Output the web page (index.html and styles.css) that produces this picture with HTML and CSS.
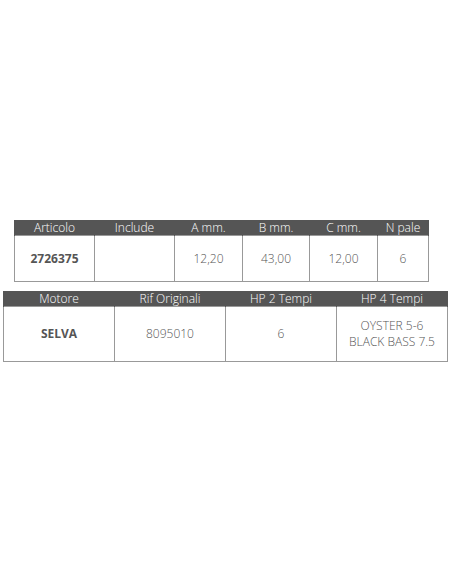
FILE: index.html
```html
<!DOCTYPE html>
<html>
<head>
<meta charset="utf-8">
<link rel="stylesheet" href="styles.css">
</head>
<body>
<div class="page">
  <table class="spec spec-a">
    <colgroup>
      <col style="width:80px"><col style="width:80px"><col style="width:68px"><col style="width:67px"><col style="width:68px"><col style="width:51px">
    </colgroup>
    <thead>
      <tr><th>Articolo</th><th>Include</th><th>A mm.</th><th>B mm.</th><th>C mm.</th><th>N pale</th></tr>
    </thead>
    <tbody>
      <tr><td class="strong">2726375</td><td></td><td>12,20</td><td>43,00</td><td>12,00</td><td>6</td></tr>
    </tbody>
  </table>
  <table class="spec spec-b">
    <colgroup>
      <col style="width:111px"><col style="width:111px"><col style="width:111px"><col style="width:111px">
    </colgroup>
    <thead>
      <tr><th>Motore</th><th>Rif Originali</th><th>HP 2 Tempi</th><th>HP 4 Tempi</th></tr>
    </thead>
    <tbody>
      <tr><td class="strong">SELVA</td><td>8095010</td><td>6</td><td>OYSTER 5-6<br>BLACK BASS 7.5</td></tr>
    </tbody>
  </table>
</div>
</body>
</html>
```
FILE: styles.css
```css
html, body {
  margin: 0;
  padding: 0;
  background: #fff;
}
body {
  font-family: "Open Sans", "Liberation Sans", sans-serif;
  color: #555;
}
.page {
  width: 452px;
  padding-top: 220px;
}
.spec {
  border-collapse: collapse;
  table-layout: fixed;
}
.spec th {
  background: #555;
  color: #fff;
  font-weight: 300;
  font-size: 12px;
  line-height: 14px;
  height: 14px;
  padding: 0;
  text-align: center;
  border: 1px solid #555;
  border-bottom: none;
}
.spec td {
  border: 1px solid #999;
  text-align: center;
  font-size: 12px;
  font-weight: 300;
  line-height: 16px;
  padding: 0;
  color: #555;
}
.spec td.strong {
  font-weight: 700;
}
.spec-a {
  margin-left: 14px;
  width: 414px;
}
.spec-a td {
  height: 45px;
}
.spec-b {
  margin-left: 3px;
  margin-top: 9px;
  width: 444px;
}
.spec-b td {
  height: 54px;
}
```
